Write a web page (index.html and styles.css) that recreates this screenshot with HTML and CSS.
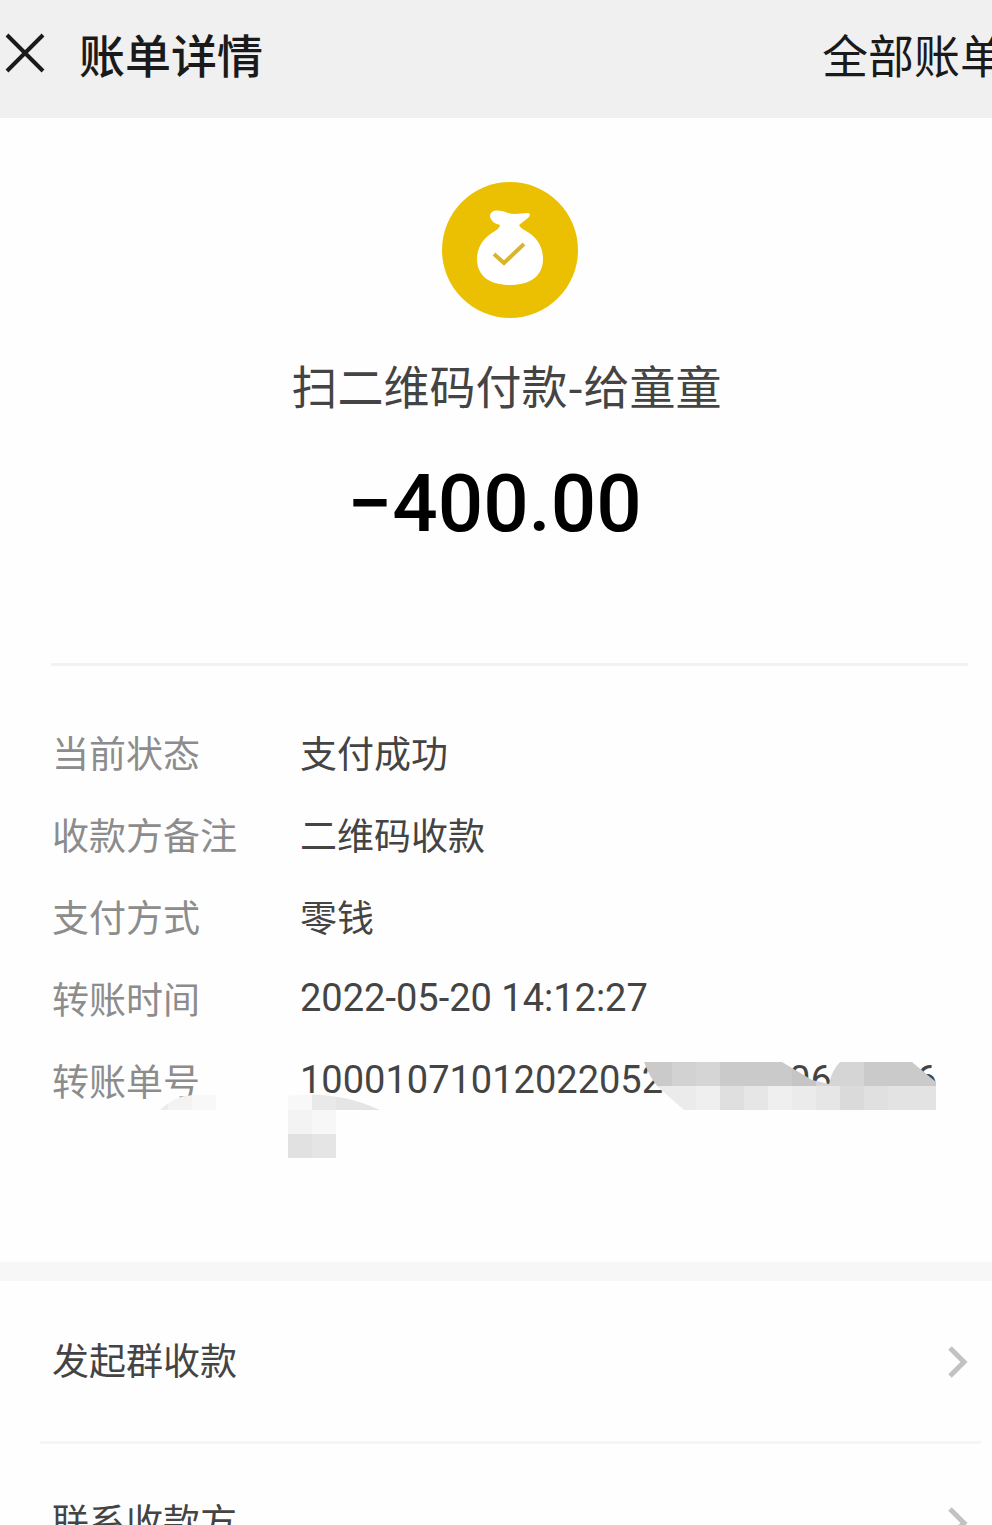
FILE: index.html
```
<!DOCTYPE html>
<html lang="zh-CN">
  <head>
    <meta charset="UTF-8" />
    <meta name="viewport" content="width=device-width, initial-scale=1.0" />
    <title>账单详情</title>
    <link rel="stylesheet" href="styles.css">
  </head>
  <body>
    <header class="topbar">
      <button type="button" class="close" aria-label="关闭">
        <svg width="40" height="40" viewBox="0 0 40 40">
          <path d="M2 2L38 38M38 2L2 38" fill="none" stroke="#1a1a1a" stroke-width="4" />
        </svg>
      </button>
      <h1>账单详情</h1>
      <a href="#" class="all-bills">全部账单</a>
    </header>

    <main>
      <section class="summary">
        <svg class="bag" width="138" height="138" viewBox="0 0 138 138">
          <circle cx="69" cy="69" r="68" fill="#ebc003" />
          <path d="M51 31C55 28 62 30 67 32C74 34 80 32 87 32C90 33 89 35 87 37L78 44C79 46 81 48 85 50C96 56 102 66 102 78C102 95 89 104 69 104C49 104 36 95 36 78C36 66 43 56 54 50C57 48 59 46 59 44C56 43 52 42 50 38C48 35 49 33 51 31Z" fill="#fff" />
          <path d="M53 73L63 82L83 63" fill="none" stroke="#d9b52b" stroke-width="4" />
        </svg>
        <p class="payee">扫二维码付款-给童童</p>
        <p class="amount">−400.00</p>
      </section>

      <dl class="details">
        <div class="row">
          <dt>当前状态</dt>
          <dd>支付成功</dd>
        </div>
        <div class="row">
          <dt>收款方备注</dt>
          <dd>二维码收款</dd>
        </div>
        <div class="row">
          <dt>支付方式</dt>
          <dd>零钱</dd>
        </div>
        <div class="row">
          <dt>转账时间</dt>
          <dd class="num">2022-05-20 14:12:27</dd>
        </div>
        <div class="row">
          <dt>转账单号</dt>
          <dd class="num order"><span>10001071012022052</span><span class="mid">06</span><span>6</span></dd>
          <!-- mosaic over the order number -->
          <svg class="mosaic" width="776" height="96" viewBox="160 1062 776 96" shape-rendering="crispEdges" aria-hidden="true">
            <clipPath id="blob">
              <path d="M644 1062H782L812 1080L829 1084Q832 1070 840 1062H912L936 1082V1110H684L658 1087Q650 1078 644 1062Z" />
            </clipPath>
            <clipPath id="arc">
              <path d="M288 1096Q335 1090 380 1110H336V1158H288ZM160 1110Q174 1096 194 1095H216V1110Z" />
            </clipPath>
            <g clip-path="url(#blob)">
              <path d="M640 1062h32v24h-32zM720 1062h72v24h-72zM864 1062h72v24h-72z" fill="#cacaca" />
              <path d="M672 1062h24v24h-24z" fill="#d2d2d2" />
              <path d="M696 1062h24v24h-24zM816 1062h48v24h-48z" fill="#d5d5d5" />
              <path d="M792 1062h24v24h-24z" fill="#c5c5c5" />
              <path d="M640 1086h56v24h-56zM792 1086h24v24h-24z" fill="#ebebeb" />
              <path d="M696 1086h24v24h-24zM768 1086h24v24h-24z" fill="#efefef" />
              <path d="M720 1086h24v24h-24z" fill="#dfdfdf" />
              <path d="M744 1086h24v24h-24zM816 1086h24v24h-24z" fill="#e6e6e6" />
              <path d="M840 1086h24v24h-24z" fill="#dadada" />
              <path d="M864 1086h24v24h-24z" fill="#e0e0e0" />
              <path d="M888 1086h48v24h-48z" fill="#e3e3e3" />
            </g>
            <g clip-path="url(#arc)">
              <path d="M160 1086h8v24h-8z" fill="#ececec" />
              <path d="M168 1086h24v24h-24z" fill="#f3f3f3" />
              <path d="M192 1086h24v24h-24zM288 1086h24v24h-24z" fill="#f8f8f8" />
              <path d="M312 1086h24v24h-24z" fill="#e9e9e9" />
              <path d="M336 1086h48v24h-48z" fill="#e5e5e5" />
              <path d="M288 1110h24v24h-24z" fill="#f3f3f3" />
              <path d="M312 1110h24v24h-24z" fill="#f7f7f7" />
              <path d="M288 1134h24v24h-24z" fill="#e1e1e1" />
              <path d="M312 1134h24v24h-24z" fill="#e5e5e5" />
            </g>
          </svg>
        </div>
      </dl>

      <nav class="actions">
        <a href="#">
          <span>发起群收款</span>
          <svg width="20" height="32" viewBox="0 0 20 32">
            <path d="M2 2L16 16L2 30" fill="none" stroke="#c2c2c2" stroke-width="5" />
          </svg>
        </a>
        <a href="#">
          <span>联系收款方</span>
          <svg width="20" height="32" viewBox="0 0 20 32">
            <path d="M2 2L16 16L2 30" fill="none" stroke="#c2c2c2" stroke-width="5" />
          </svg>
        </a>
      </nav>
    </main>
  </body>
</html>
```
FILE: styles.css
```
* {
  box-sizing: border-box;
}

body {
  margin: 0;
  height: 100vh;
  overflow: hidden;
  background: #fefefe;
  color: #444;
  font-family: "Noto Sans CJK SC", sans-serif;
  font-size: 37px;
}

h1,
p,
dl,
dd {
  margin: 0;
}

a {
  color: inherit;
  text-decoration: none;
}

.topbar {
  display: flex;
  align-items: center;
  height: 118px;
  padding: 0 0 13px 5px;
  background: #f0f0f0;
  color: #1a1a1a;
}

.close {
  display: flex;
  margin-right: 34px;
  padding: 0;
  border: 0;
  background: none;
}

h1 {
  font-size: 46px;
  font-weight: 500;
}

.topbar h1,
.all-bills {
  line-height: 60px;
  white-space: nowrap;
}

/* runs past the right edge of the screen */
.all-bills {
  margin-left: auto;
  margin-right: -14px;
  font-size: 46px;
}

.summary {
  display: flex;
  flex-direction: column;
  align-items: center;
  height: 548px;
  margin: 0 24px 0 51px;
  padding-top: 63px;
  border-bottom: 3px solid #f2f2f2;
}

.payee {
  margin-top: 33px;
  padding-right: 6px;
  font-size: 46px;
  line-height: 64px;
}

.amount {
  margin-top: 38px;
  padding-right: 30px;
  color: #000;
  font-family: Roboto, sans-serif;
  font-size: 80px;
  font-weight: 500;
  line-height: 100px;
}

.details {
  height: 596px;
  padding: 45px 24px 0 52px;
}

.row {
  display: flex;
  position: relative;
  line-height: 82px;
}

dt {
  width: 248px;
  color: #8c8c8c;
}

.num {
  font-family: Roboto, sans-serif;
  font-size: 38px;
}

.order {
  display: flex;
}

.mid {
  margin: 0 84px 0 126px;
}

.mosaic {
  position: absolute;
  left: 108px;
  top: 23px;
}

.actions {
  padding-top: 2px;
  border-top: 19px solid #f7f7f7;
}

.actions a {
  display: flex;
  justify-content: space-between;
  align-items: center;
  height: 161px;
  margin: 0 11px 0 40px;
  padding: 0 13px 0 12px;
  border-bottom: 3px solid #f5f5f5;
}

.actions span {
  padding-bottom: 6px;
}
```
